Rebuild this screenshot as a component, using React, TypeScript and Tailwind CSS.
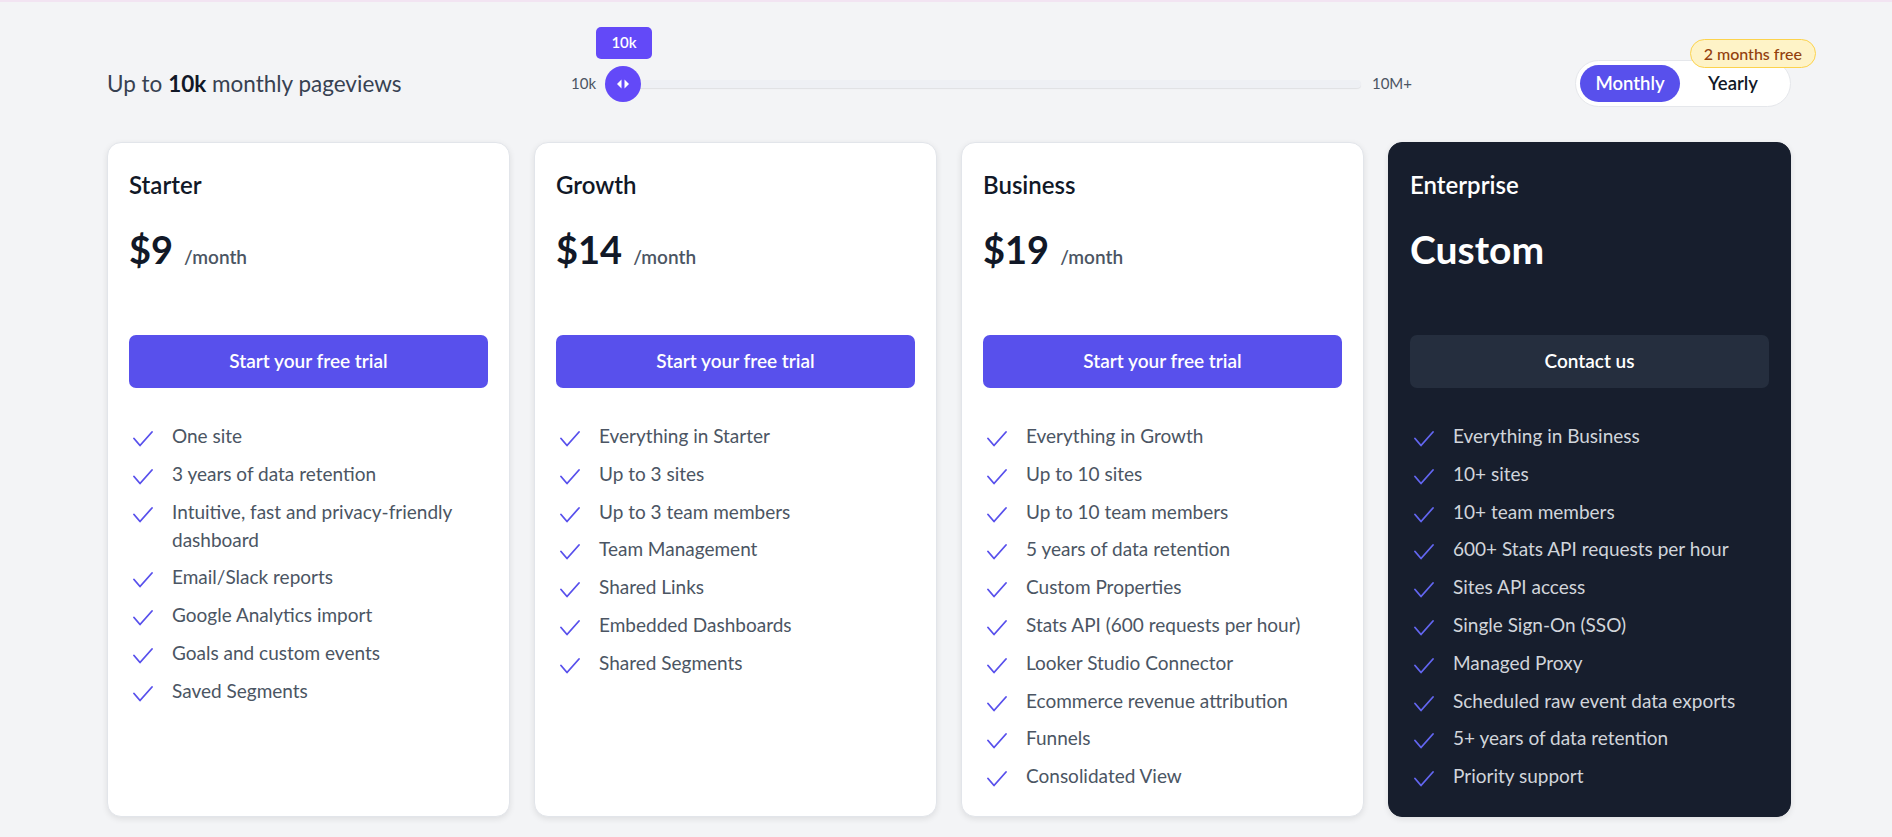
import React from 'react';

type Plan = {
  name: string;
  price?: string;
  cta: string;
  features: string[];
  dark?: boolean;
};

const plans: Plan[] = [
  {
    name: 'Starter',
    price: '$9',
    cta: 'Start your free trial',
    features: [
      'One site',
      '3 years of data retention',
      'Intuitive, fast and privacy-friendly dashboard',
      'Email/Slack reports',
      'Google Analytics import',
      'Goals and custom events',
      'Saved Segments',
    ],
  },
  {
    name: 'Growth',
    price: '$14',
    cta: 'Start your free trial',
    features: [
      'Everything in Starter',
      'Up to 3 sites',
      'Up to 3 team members',
      'Team Management',
      'Shared Links',
      'Embedded Dashboards',
      'Shared Segments',
    ],
  },
  {
    name: 'Business',
    price: '$19',
    cta: 'Start your free trial',
    features: [
      'Everything in Growth',
      'Up to 10 sites',
      'Up to 10 team members',
      '5 years of data retention',
      'Custom Properties',
      'Stats API (600 requests per hour)',
      'Looker Studio Connector',
      'Ecommerce revenue attribution',
      'Funnels',
      'Consolidated View',
    ],
  },
  {
    name: 'Enterprise',
    cta: 'Contact us',
    dark: true,
    features: [
      'Everything in Business',
      '10+ sites',
      '10+ team members',
      '600+ Stats API requests per hour',
      'Sites API access',
      'Single Sign-On (SSO)',
      'Managed Proxy',
      'Scheduled raw event data exports',
      '5+ years of data retention',
      'Priority support',
    ],
  },
];

function Check({ dark }: { dark?: boolean }) {
  return (
    <svg
      width="24"
      height="16"
      viewBox="0 0 24 16"
      fill="none"
      stroke="currentColor"
      strokeWidth="1.8"
      strokeLinecap="round"
      strokeLinejoin="round"
      className={`shrink-0 mt-[9px] ${dark ? 'text-[#6366f1]' : 'text-[#5850ec]'}`}
    >
      <path d="M5 7.5 L11 14.5 L23 1" />
    </svg>
  );
}

function Header() {
  return (
    <div className="flex items-center h-[47px]">
      <p className="w-[464px] shrink-0 text-[22.5px] text-[#374151]">
        Up to <span className="font-bold text-[#111827]">10k</span> monthly pageviews
      </p>

      <div className="flex items-center w-[841px]">
        <span className="w-[24px] text-[15px] text-[#4b5563]">10k</span>
        <div className="relative ml-[10px] w-[756px] h-[8px] rounded-full bg-[#eef0f4] shadow-[0_1px_1px_rgba(0,0,0,0.08)]">
          <div className="absolute left-0 top-1/2 -translate-y-1/2 w-[36px] h-[36px] rounded-full bg-[#6349f8] flex items-center justify-center">
            <svg width="14" height="10" viewBox="0 0 14 10" fill="white">
              <polygon points="5.5,0.5 1,5 5.5,9.5" />
              <polygon points="8.5,0.5 13,5 8.5,9.5" />
            </svg>
          </div>
          <div className="absolute left-[-9px] top-[-53px] w-[56px] h-[32px] rounded-[5px] bg-[#6349f8] text-white text-[15px] font-semibold flex items-center justify-center">
            10k
          </div>
        </div>
        <span className="ml-[11px] text-[15px] text-[#4b5563]">10M+</span>
      </div>

      <div className="relative ml-auto flex items-center h-[47px] p-[4px] rounded-full bg-white border border-[#e5e7eb]">
        <button className="w-[100px] h-[37px] rounded-full bg-[#5850ec] text-white text-[18.5px] font-semibold">
          Monthly
        </button>
        <button className="w-[106px] h-[37px] rounded-full text-[#111827] text-[18.5px] font-semibold">
          Yearly
        </button>
        <span className="absolute top-[-22px] right-[-26px] h-[29px] px-[13px] rounded-full bg-[#fef3c7] border border-[#fcd34d] text-[#92400e] text-[16px] font-medium flex items-center whitespace-nowrap">
          2 months free
        </span>
      </div>
    </div>
  );
}

function PlanCard({ plan }: { plan: Plan }) {
  const dark = plan.dark;
  return (
    <div
      className={`rounded-[14px] border px-[21px] pt-[26px] pb-[26px] shadow-[0_2px_6px_rgba(0,0,0,0.09)] ${
        dark ? 'bg-[#171e2d] border-[#171e2d]' : 'bg-white border-[#e2e5ea]'
      }`}
    >
      <h3 className={`text-[24px] leading-[32px] font-semibold ${dark ? 'text-white' : 'text-[#111827]'}`}>
        {plan.name}
      </h3>
      <div className="mt-[28px] h-[40px] flex items-baseline">
        {plan.price ? (
          <>
            <span className="text-[38px] leading-[40px] font-bold text-[#111827]">{plan.price}</span>
            <span className="ml-[11px] text-[19px] font-semibold text-[#4b5563]">/month</span>
          </>
        ) : (
          <span className="text-[39px] leading-[40px] font-bold text-white">Custom</span>
        )}
      </div>
      <button
        className={`mt-[66px] w-full h-[53px] rounded-[7px] text-white text-[19px] font-semibold ${
          dark ? 'bg-[#252e3e]' : 'bg-[#5850ec]'
        }`}
      >
        {plan.cta}
      </button>
      <ul className="mt-[34px] flex flex-col gap-[9.8px]">
        {plan.features.map((f) => (
          <li key={f} className="flex items-start gap-[19px]">
            <Check dark={dark} />
            <span className={`text-[19px] leading-[28px] ${dark ? 'text-[#d1d5db]' : 'text-[#4b5563]'}`}>{f}</span>
          </li>
        ))}
      </ul>
    </div>
  );
}

export default function App() {
  return (
    <div className="min-h-screen bg-[#f3f4f6] border-t-2 border-[#f2e4f2] font-['Lato',sans-serif]">
      <div className="pl-[107px] pr-[101px] pt-[58px]">
        <Header />
        <div className="grid grid-cols-4 gap-[24px] mt-[35px]">
          {plans.map((p) => (
            <PlanCard key={p.name} plan={p} />
          ))}
        </div>
      </div>
    </div>
  );
}
